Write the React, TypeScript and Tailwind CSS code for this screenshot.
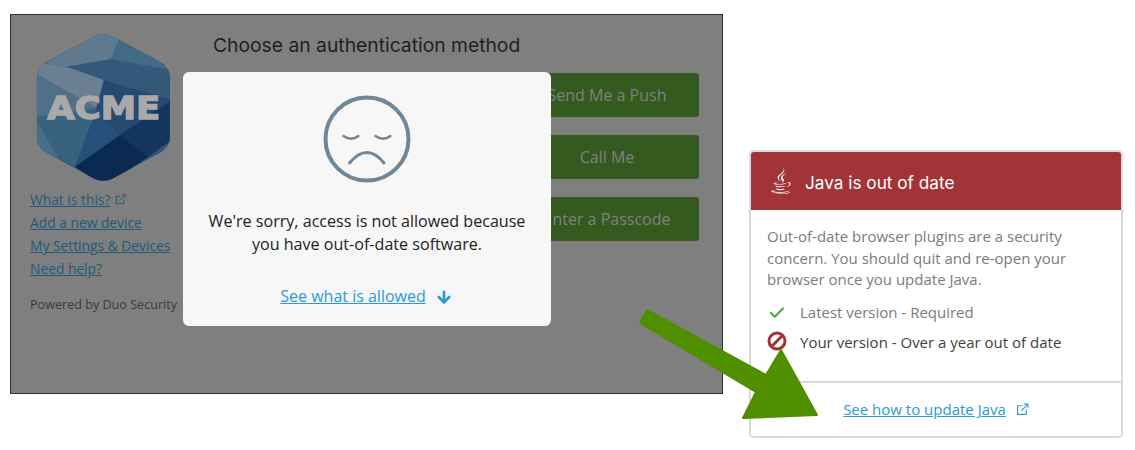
import React from 'react';
import { ArrowDown, Check } from 'lucide-react';
import { FaJava } from 'react-icons/fa';

const openSans = "font-['Open_Sans',sans-serif]";

const ExternalIcon = ({ className }: { className?: string }) => (
  <svg viewBox="0 0 12 12" fill="none" stroke="currentColor" strokeWidth="1" className={className}>
    <path d="M6 2.5H1.5v8h8V6" />
    <path d="M5 7l5.5-5.5M7.5 1h3.5v3.5" />
  </svg>
);

const AcmeLogo = () => (
  <svg viewBox="0 0 450 480" className="h-[160px] w-[150px]">
    <defs>
      <clipPath id="hex">
        <path d="M205 20Q235 5 265 20L405 95Q435 112 435 145L435 320Q435 350 405 368L265 445Q235 460 205 445L65 368Q35 350 35 320L35 145Q35 112 65 95Z" />
      </clipPath>
    </defs>
    <g clipPath="url(#hex)">
      <rect x="0" y="0" width="450" height="480" fill="#2f5675" />
      <polygon points="60,100 235,0 282,28 258,88 125,110" fill="#5f798e" />
      <polygon points="282,28 440,115 440,125 258,88" fill="#436a85" />
      <polygon points="125,110 258,88 440,120 440,210 237,150" fill="#33597a" />
      <polygon points="30,95 60,100 125,110 237,150 215,235 30,130" fill="#6a7f91" />
      <polygon points="30,130 215,235 195,300 30,262" fill="#4f7089" />
      <polygon points="237,150 440,210 285,315 195,300" fill="#254a70" />
      <polygon points="30,262 215,235 150,410 100,385" fill="#39627f" />
      <polygon points="30,262 100,385 60,370 30,330" fill="#486f8a" />
      <polygon points="215,235 285,315 150,410" fill="#24507a" />
      <polygon points="285,315 440,210 440,330 370,380" fill="#143560" />
      <polygon points="150,410 285,315 370,380 235,470" fill="#0b2a52" />
      <text
        x="67"
        y="266"
        textLength="339"
        lengthAdjust="spacingAndGlyphs"
        fontFamily="'DejaVu Sans', sans-serif"
        fontWeight="700"
        fontSize="94"
        fill="#a9a9a9"
        stroke="#a9a9a9"
        strokeWidth="4"
      >
        ACME
      </text>
    </g>
  </svg>
);

const SadFace = () => (
  <svg viewBox="0 0 88 88" fill="none" stroke="#6f8797" className="h-[88px] w-[88px]">
    <circle cx="44" cy="44" r="41.5" strokeWidth="4" />
    <path d="M20.500 41q7.500 5.500 15 0M52.500 41q7.500 5.500 15 0" strokeWidth="2.500" strokeLinecap="round" />
    <path d="M26.500 68Q44 47 61 68" strokeWidth="3" strokeLinecap="round" />
  </svg>
);

const MethodButton = ({ label }: { label: string }) => (
  <div className="flex h-[44px] items-center justify-center rounded-[3px] bg-[#345a20] text-[16px] text-[#808080]">
    {label}
  </div>
);

const SideLink = ({ children }: { children: React.ReactNode }) => (
  <a className="block h-[23px] text-[13.800px] leading-[23px] text-[#205a7e] underline">{children}</a>
);

const Frame = () => (
  <div className={`relative h-[380px] w-[713px] shrink-0 border border-[#1d3245] bg-[#7f7f7f] ${openSans}`}>
    <div className="flex h-full">
      <div className="w-[189px] shrink-0 pl-[19px]">
        <div className="-ml-[5px] mt-[15px] h-[158px]">
          <AcmeLogo />
        </div>
        <SideLink>
          <span className="inline-flex items-center gap-[5px]">
            <span className="underline">What is this?</span>
            <ExternalIcon className="h-[11px] w-[11px]" />
          </span>
        </SideLink>
        <SideLink>Add a new device</SideLink>
        <SideLink>My Settings &amp; Devices</SideLink>
        <SideLink>Need help?</SideLink>
        <p className="mt-[13px] whitespace-nowrap text-[12.600px] leading-[23px] text-[#3b3b3b]">Powered by Duo Security</p>
      </div>
      <div className="flex-1 pr-[23px]">
        <h1 className="ml-[13px] mt-[17px] h-[41px] font-['Inter',sans-serif] text-[19.300px] leading-[26px] text-[#1f1f1f]">
          Choose an authentication method
        </h1>
        <div className="ml-[315px] flex flex-col gap-[18px]">
          <MethodButton label="Send Me a Push" />
          <MethodButton label="Call Me" />
          <MethodButton label="Enter a Passcode" />
        </div>
      </div>
    </div>
    <div className="absolute left-[172px] top-[57px] flex h-[254px] w-[368px] flex-col items-center rounded-[6px] bg-[#f7f7f7] pt-[23px]">
      <SadFace />
      <p className="mt-[27px] text-center text-[16.100px] leading-[23px] text-[#222222]">
        We're sorry, access is not allowed because
        <br />
        you have out-of-date software.
      </p>
      <div className="mt-[29px] -ml-[1px] flex items-center gap-[9px] text-[16px] leading-[23px] text-[#2b9ad9]">
        <a className="underline">See what is allowed</a>
        <ArrowDown className="h-[18px] w-[18px]" strokeWidth={3.500} />
      </div>
    </div>
  </div>
);

const JavaCard = () => (
  <div className={`ml-[26px] mt-[136px] flex h-[288px] w-[374px] shrink-0 flex-col overflow-hidden rounded-[5px] border-2 border-[#d9d9d9] bg-white ${openSans}`}>
    <div className="flex h-[58px] items-center bg-[#a23437] pl-[17px] text-white">
      <FaJava className="h-[26px] w-[26px]" />
      <span className="ml-[11px] pt-[4px] font-['Inter',sans-serif] text-[17.200px]">Java is out of date</span>
    </div>
    <div className="flex-1 pl-[16px] pt-[16px]">
      <p className="whitespace-nowrap text-[15px] leading-[21.500px] text-[#7b7b7b]">
        Out-of-date browser plugins are a security
        <br />
        concern. You should quit and re-open your
        <br />
        browser once you update Java.
      </p>
      <div className="mt-[11px] flex h-[22px] items-center text-[15px] text-[#7b7b7b]">
        <Check className="ml-[1px] h-[18px] w-[18px] text-[#4cae3f]" strokeWidth={3} />
        <span className="ml-[14px]">Latest version - Required</span>
      </div>
      <div className="mt-[8px] flex h-[22px] items-center text-[15px] text-[#3f3f3f]">
        <svg viewBox="0 0 20 20" fill="none" stroke="#a23437" strokeWidth="3" className="-mt-[3px] h-[20px] w-[20px]">
          <circle cx="10" cy="10" r="8" />
          <path d="M4.500 15.500L15.500 4.500" />
        </svg>
        <span className="ml-[13px]">Your version - Over a year out of date</span>
      </div>
    </div>
    <div className="flex h-[55px] items-center justify-center border-t-2 border-[#d9d9d9] text-[15px] text-[#2b9ad9]">
      <a className="underline">See how to update Java</a>
      <ExternalIcon className="ml-[10px] h-[13px] w-[13px]" />
    </div>
  </div>
);

export default function App() {
  return (
    <div className="relative h-[450px] w-[1135px] overflow-hidden bg-white">
      <div className="flex pl-[10px] pt-[14px]">
        <Frame />
        <JavaCard />
      </div>
      {/* annotation arrow sits over both panels */}
      <svg viewBox="0 0 1135 450" className="pointer-events-none absolute left-0 top-0 h-[450px] w-[1135px]">
        <path
          d="M647 310L766 375L781 350L817 415L743 418L756 392L640 323Z"
          fill="#4f8f00"
          stroke="#4f8f00"
          strokeWidth="2"
          strokeLinejoin="round"
        />
      </svg>
    </div>
  );
}
